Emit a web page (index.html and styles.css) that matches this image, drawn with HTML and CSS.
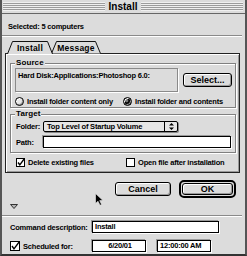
FILE: index.html
```html
<!DOCTYPE html>
<html lang="en">
<head>
    <meta charset="UTF-8">
    <title>Install</title>
    <link rel="stylesheet" href="styles.css">
</head>
<body>
    <div class="window">
        <div class="titlebar">
            <div class="stripes"><span class="title">Install</span></div>
        </div>

        <div class="selected">Selected: 5 computers</div>
        <hr class="etch">

        <div class="tabs">
            <div class="tab tab-install">
                <svg viewBox="0 0 46 13" preserveAspectRatio="none"><path d="M0.5 13 L5.5 0.5 H40.5 L45.5 13" fill="#dcdcdc" stroke="#111"/></svg>
                <span>Install</span>
            </div>
            <div class="tab tab-message">
                <svg viewBox="0 0 50 13" preserveAspectRatio="none"><path d="M0.5 12.5 L5.5 0.5 H44.5 L49.5 12.5" fill="#dcdcdc" stroke="#111"/></svg>
                <span>Message</span>
            </div>
        </div>

        <div class="panel">
            <fieldset class="group group-source">
                <legend>Source</legend>
                <div class="source-row">
                    <div class="textbox">Hard Disk:Applications:Photoshop 6.0:</div>
                    <button class="btn btn-select">Select...</button>
                </div>
                <div class="option-row">
                    <label class="option option-left"><span class="radio"></span>Install folder content only</label>
                    <label class="option"><span class="radio radio-on"></span>Install folder and contents</label>
                </div>
            </fieldset>

            <fieldset class="group group-target">
                <legend>Target</legend>
                <div class="field-row">
                    <span class="label">Folder:</span>
                    <div class="popup">
                        <span class="popup-text">Top Level of Startup Volume</span>
                        <span class="popup-arrows">
                            <svg width="5" height="7" viewBox="0 0 5 7"><path d="M2.5 0 L5 2.5 H0 Z M0 4.5 H5 L2.5 7 Z" fill="#000"/></svg>
                        </span>
                    </div>
                </div>
                <div class="field-row field-row-path">
                    <span class="label">Path:</span>
                    <div class="input input-path"></div>
                </div>
            </fieldset>

            <div class="option-row check-row">
                <label class="option option-left">
                    <svg class="box" width="9" height="9" viewBox="0 0 9 9"><rect x="0.5" y="0.5" width="8" height="8" fill="#fff" stroke="#000"/><path d="M2 4.5 L3.8 6.8 L8.5 0.5" fill="none" stroke="#000" stroke-width="1.4"/></svg>
                    Delete existing files
                </label>
                <label class="option">
                    <svg class="box" width="9" height="9" viewBox="0 0 9 9"><rect x="0.5" y="0.5" width="8" height="8" fill="#fff" stroke="#000"/></svg>
                    Open file after installation
                </label>
            </div>
        </div>

        <div class="actions">
            <button class="btn btn-cancel">Cancel</button>
            <span class="default-ring"><button class="btn btn-ok">OK</button></span>
        </div>

        <div class="disclosure">
            <svg width="8" height="5" viewBox="0 0 8 5"><path d="M0.5 0.5 H7.5 L4 4.5 Z" fill="#b4b4b4" stroke="#333"/></svg>
        </div>
        <hr class="etch etch-bottom">

        <div class="form-row">
            <span class="form-label">Command description:</span>
            <div class="input input-command">Install</div>
        </div>
        <div class="form-row form-row-schedule">
            <label class="form-label option">
                <svg class="box" width="10" height="10" viewBox="0 0 10 10"><rect x="0.5" y="0.5" width="9" height="9" fill="#fff" stroke="#000"/><path d="M2 5 L4 7.8 L9.5 0.5" fill="none" stroke="#000" stroke-width="1.4"/></svg>
                Scheduled for:
            </label>
            <div class="input input-date">6/20/01</div>
            <div class="input input-time">12:00:00 AM</div>
        </div>

        <svg class="cursor" width="9" height="13" viewBox="0 0 9 13"><path d="M0.5 0.5 V10.5 L3 8.2 L5 12.3 L6.6 11.5 L4.7 7.6 H8 Z" fill="#000" stroke="#eee" stroke-width="0.6"/></svg>
    </div>
</body>
</html>
```

FILE: styles.css
```css
* {
    box-sizing: border-box;
}

body {
    margin: 0;
    background: #dcdcdc;
    font-family: "Liberation Sans", Arial, sans-serif;
    font-size: 7.5px;
    font-weight: bold;
    letter-spacing: -0.2px;
    color: #000;
    white-space: nowrap;
}

.window {
    position: relative;
    width: 247px;
    height: 256px;
    background: #dcdcdc;
    border-left: 2px solid #555;
    border-right: 2px solid #555;
    border-bottom: 2px solid #333;
    display: flex;
    flex-direction: column;
    overflow: hidden;
}

/* title bar */
.titlebar {
    height: 14px;
    padding: 2px 2px 2px 1px;
    border-bottom: 1px solid #666;
    display: flex;
}

.stripes {
    flex: 1;
    display: flex;
    justify-content: center;
    align-items: center;
    background: repeating-linear-gradient(to bottom, #f0f0f0 0 1px, #9c9c9c 1px 2px);
}

.title {
    background: #dcdcdc;
    padding: 0 4px;
    font-size: 10px;
    line-height: 11px;
    letter-spacing: 0;
}

.selected {
    margin: 7px 0 0 6px;
    line-height: 12px;
}

.etch {
    margin: 2px 3px 0 0;
    height: 0;
    border: 0;
    border-top: 1px solid #8a8a8a;
    border-bottom: 1px solid #fff;
}

/* tabs */
.tabs {
    display: flex;
    height: 13px;
    margin: 4px 0 -1px 5px;
    position: relative;
    z-index: 1;
}

.tab {
    position: relative;
    height: 13px;
    display: flex;
    align-items: center;
    justify-content: center;
    font-size: 8.5px;
    letter-spacing: 0.2px;
}

.tab svg {
    position: absolute;
    top: 0;
    left: 0;
    width: 100%;
    height: 100%;
}

.tab span {
    position: relative;
    padding-top: 1px;
}

.tab-install {
    width: 46px;
    z-index: 2;
}

.tab-message {
    width: 50px;
    margin-left: -2px;
}

.panel {
    height: 120px;
    margin: 0 5px 0 3px;
    border: 1px solid #222;
    box-shadow: inset 1px 1px 0 #fff, inset -1px -1px 0 #999;
    display: flex;
    flex-direction: column;
}

/* group boxes */
.group {
    margin: 4px 3px 0 4px;
    padding: 0 4px 1px 4px;
    border: 1px solid #808080;
    box-shadow: inset 1px 1px 0 #fff, 1px 1px 0 #fff;
    min-width: 0;
}

.group legend {
    padding: 0 1px;
    font-size: 8px;
    line-height: 10px;
    letter-spacing: 0.1px;
    background: #dcdcdc;
    position: relative;
}

.group-target {
    margin-top: 1px;
    padding-bottom: 4px;
}

.source-row {
    display: flex;
    align-items: center;
}

.textbox {
    width: 163px;
    height: 24px;
    padding: 2px 2px;
    border: 1px solid #8a8a8a;
    box-shadow: 1px 1px 0 #fff;
}

.btn {
    font-family: inherit;
    font-weight: bold;
    font-size: 9px;
    letter-spacing: 0;
    color: #000;
    padding: 0;
    background: #dcdcdc;
    border: 1px solid #000;
    border-radius: 3px;
    box-shadow: inset 1px 1px 0 #fff, inset -1px -1px 0 #999;
}

.btn-select {
    margin-left: auto;
    margin-right: -1px;
    width: 49px;
    height: 14px;
}

.option-row {
    display: flex;
    align-items: center;
    height: 9px;
    margin-top: 5px;
}

.option {
    display: flex;
    align-items: center;
    gap: 3px;
}

.option-left {
    width: 108px;
}

.radio {
    width: 9px;
    height: 9px;
    border: 1px solid #000;
    border-radius: 50%;
    background: #e8e8e8;
    box-shadow: inset 1px 1px 0 #fff, inset -1px -1px 0 #999;
}

.radio-on {
    background: radial-gradient(circle at 40% 40%, #777 0 1px, #000 2px);
}

.field-row {
    display: flex;
    align-items: center;
    height: 11px;
    margin-top: 2px;
}

.field-row-path {
    height: 12px;
    margin-top: 4px;
}

.label {
    width: 28px;
    padding-left: 1px;
}

.popup {
    width: 135px;
    height: 11px;
    display: flex;
    background: #e6e6e6;
    border: 1px solid #000;
    border-radius: 2px;
    box-shadow: 1px 1px 0 #888;
}

.popup-text {
    flex: 1;
    padding-left: 3px;
    line-height: 9px;
}

.popup-arrows {
    width: 13px;
    border-left: 1px solid #000;
    display: flex;
    align-items: center;
    justify-content: center;
}

.input {
    height: 12px;
    background: #fff;
    border: 1px solid #000;
    box-shadow: -1px -1px 0 #999, 1px 1px 0 #fff;
    line-height: 10px;
    padding-left: 2px;
}

.input-path {
    flex: 1;
}

.check-row {
    margin: 5px 0 0 10px;
}

.check-row .option-left {
    width: 110px;
}

/* dialog buttons */
.actions {
    display: flex;
    align-items: center;
    justify-content: flex-end;
    gap: 8px;
    height: 18px;
    margin: 7px 9px 0 0;
}

.btn-cancel {
    width: 56px;
    height: 14px;
}

.default-ring {
    display: flex;
    padding: 1px;
    border: 2px solid #000;
    border-radius: 5px;
}

.btn-ok {
    width: 51px;
    height: 12px;
}

.disclosure {
    height: 5px;
    margin: 6px 0 0 8px;
    display: flex;
}

.etch-bottom {
    margin-top: 6px;
}

.form-row {
    display: flex;
    align-items: center;
    height: 12px;
    margin-top: 4px;
    padding-left: 8px;
}

.form-row-schedule {
    margin-top: 7px;
}

.form-label {
    width: 82px;
}

.input-command {
    width: 127px;
}

.input-date {
    width: 54px;
    text-align: center;
}

.input-time {
    width: 54px;
    margin-left: 11px;
}

.cursor {
    position: absolute;
    left: 93px;
    top: 193px;
}
```
